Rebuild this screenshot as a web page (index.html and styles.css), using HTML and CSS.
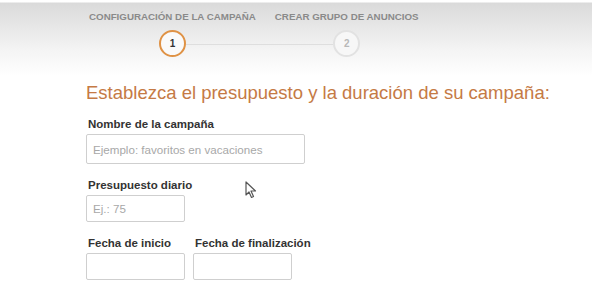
FILE: index.html
```html
<!DOCTYPE html>
<html lang="es">
<head>
<meta charset="utf-8">
<title>Campaña</title>
<link rel="stylesheet" href="styles.css">
</head>
<body>
<header class="wizard">
  <div class="steps">
    <div class="step step-active">
      <span class="step-label">Configuración de la campaña</span>
      <span class="step-circle">1</span>
    </div>
    <div class="step">
      <span class="step-label">Crear grupo de anuncios</span>
      <span class="step-circle">2</span>
    </div>
  </div>
</header>
<main class="form">
  <h1 class="title">Establezca el presupuesto y la duración de su campaña:</h1>
  <div class="field">
    <label class="label">Nombre de la campaña</label>
    <input class="input input-wide" type="text" placeholder="Ejemplo: favoritos en vacaciones">
  </div>
  <div class="field field-cursor">
    <label class="label">Presupuesto diario</label>
    <input class="input input-small" type="text" placeholder="Ej.: 75">
    <svg class="cursor" width="12" height="18" viewBox="0 0 12 18"><path d="M1 1 L1 14 L4 11 L6.5 16.5 L8.5 15.5 L6 10 L10.5 10 Z" fill="#fff" stroke="#555" stroke-width="1.2" stroke-linejoin="round"/></svg>
  </div>
  <div class="field-row">
    <div class="field">
      <label class="label">Fecha de inicio</label>
      <input class="input input-small" type="text">
    </div>
    <div class="field">
      <label class="label">Fecha de finalización</label>
      <input class="input input-small" type="text">
    </div>
  </div>
</main>
</body>
</html>
```
FILE: styles.css
```css
* { box-sizing: border-box; }
html, body { margin: 0; padding: 0; background: #fff; }
body {
  font-family: "Liberation Sans", Arial, sans-serif;
  width: 592px;
  height: 301px;
  overflow: hidden;
}
.wizard {
  height: 78px;
  padding-top: 11px;
  padding-left: 89px;
  background: linear-gradient(to bottom, #fff 0, #fff 2px, #dadada 3px, #f4f4f4 50px, #fff 76px);
}
.steps {
  position: relative;
  display: flex;
  gap: 19px;
}
.steps::before {
  content: "";
  position: absolute;
  left: 97px;
  width: 147px;
  top: 33px;
  height: 1px;
  background: #dedede;
}
.step {
  display: flex;
  flex-direction: column;
  align-items: center;
  gap: 8px;
}
.step-label {
  font-size: 9.75px;
  font-weight: bold;
  text-transform: uppercase;
  color: #8a8a8a;
  line-height: 11px;
  white-space: nowrap;
}
.step-circle {
  position: relative;
  width: 27px;
  height: 27px;
  border-radius: 50%;
  border: 2px solid #e2e2e2;
  background: #f7f7f7;
  color: #b8b8b8;
  font-size: 10px;
  font-weight: bold;
  display: flex;
  align-items: center;
  justify-content: center;
}
.step-active .step-circle {
  border-color: #df9245;
  background: #fafafa;
  color: #333;
}
.form {
  padding-left: 86px;
}
.title {
  margin: 3px 0 12px;
  font-size: 18.5px;
  font-weight: normal;
  line-height: 24px;
  color: #c57a45;
}
.field {
  display: flex;
  flex-direction: column;
  margin-bottom: 14px;
}
.field-cursor { position: relative; }
.label {
  font-size: 11.5px;
  font-weight: bold;
  color: #333;
  line-height: 14px;
  margin: 0 0 3px 2px;
}
.input {
  height: 30px;
  border: 1px solid #cfcfcf;
  border-radius: 2px;
  padding: 0 6px;
  font-family: "Liberation Sans", Arial, sans-serif;
  font-size: 11.6px;
  color: #333;
  background: #fff;
}
.input::placeholder { color: #a8a8a8; }
.input-wide { width: 219px; }
.input-small { width: 99px; height: 27px; }
.field-row {
  display: flex;
  gap: 8px;
}
.cursor {
  position: absolute;
  left: 159px;
  top: 3px;
}
```
